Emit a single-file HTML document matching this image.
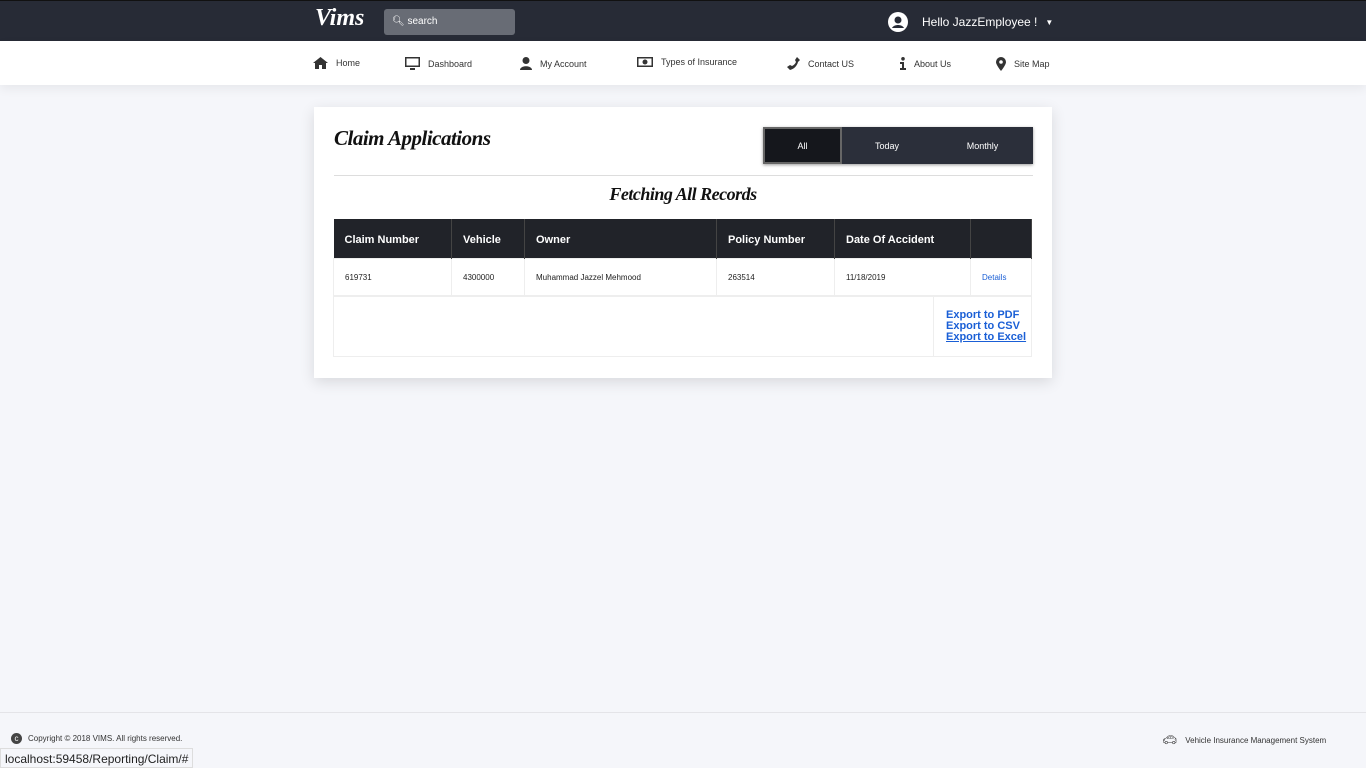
<!DOCTYPE html>
<html><head><meta charset="utf-8"><style>
*{box-sizing:border-box;margin:0;padding:0}
body{width:1366px;height:768px;background:#f5f6fa;font-family:"Liberation Sans",sans-serif;position:relative;overflow:hidden}
.top{position:absolute;top:0;left:0;width:1366px;height:41px;background:#272b36;border-top:1px solid #111}
.logo{position:absolute;left:315px;top:4px;color:#fff;font:italic bold 24px "Liberation Serif",serif}
.search{position:absolute;left:384px;top:8px;width:131px;height:26px;background:#686c75;border-radius:3px;color:#fff;font-size:10px;padding:7px 0 0 8px}
.user{position:absolute;left:888px;top:11px;color:#fff;font-size:12px;display:flex;align-items:center}
.nav{position:absolute;top:41px;left:0;width:1366px;height:44px;background:#fff;box-shadow:0 4px 10px rgba(0,0,0,.06)}
.nav span{position:absolute;top:16px;font-size:9px;color:#333;display:flex;align-items:center}
.nav svg{margin-right:8px}
.card{position:absolute;left:314px;top:107px;width:738px;height:271px;background:#fff;box-shadow:0 4px 14px rgba(0,0,0,.12)}
.h1{position:absolute;left:20px;top:19px;font:italic bold 21px "Liberation Serif",serif;color:#111;letter-spacing:-0.5px}
.tabs{position:absolute;left:449px;top:20px;width:270px;height:37px;background:#2b2f3a;display:flex;color:#fff;font-size:9px;box-shadow:0 1px 3px rgba(0,0,0,.4)}
.tabs div{display:flex;align-items:center;justify-content:center}
.hr{position:absolute;left:20px;top:68px;width:699px;height:1px;background:#ddd}
.h2{position:absolute;left:0;width:738px;text-align:center;top:77px;font:italic bold 18px "Liberation Serif",serif;color:#111;letter-spacing:-0.5px}
table{position:absolute;left:19px;top:112px;width:699px;border-collapse:collapse;font-size:8px}
th{background:#212329;color:#fff;font-size:11px;text-align:left;height:39px;padding:3px 0 0 11px;border-right:1px solid #444}
td{height:38px;padding:1px 0 0 11px;border:1px solid #eee;color:#222}
.exp{position:absolute;left:19px;top:188px;width:699px;height:62px;border:1px solid #eee}
.exp div{position:absolute;right:0;top:0;width:98px;height:60px;border-left:1px solid #eee;padding:14px 0 0 12px;color:#1a5fd6;font-size:11px;line-height:11px;font-weight:bold}
.foot{position:absolute;top:712px;left:0;width:1366px;border-top:1px solid #e4e4e8}
.status{position:absolute;left:0;top:748px;height:20px;border:1px solid #ddd;background:#f5f6fa;font-size:12px;padding:3px 4px;color:#222}
</style></head><body>
<div class="top">
<div class="logo">Vims</div>
<div class="search">&#128269;&#xFE0E; search</div>
<div class="user"><svg width="20" height="20" viewBox="0 0 20 20"><circle cx="10" cy="10" r="10" fill="#fff"/><circle cx="10" cy="8" r="3.5" fill="#272b36"/><path d="M4 16c2-4 10-4 12 0" fill="#272b36"/></svg><span style="margin-left:14px">Hello JazzEmployee !</span><span style="margin-left:8px;font-size:8px">▼</span></div>
</div>
<div class="nav">
<span style="left:313px"><svg width="15" height="12" viewBox="0 0 15 12"><path d="M7.5 0L0 6h2v6h4V8h3v4h4V6h2z" fill="#333"/></svg>Home</span>
<span style="left:405px"><svg width="15" height="13" viewBox="0 0 15 13"><rect x="0" y="0" width="15" height="10" fill="#333"/><rect x="1.5" y="1.5" width="12" height="7" fill="#fff"/><rect x="5" y="11" width="5" height="2" fill="#333"/></svg>Dashboard</span>
<span style="left:520px"><svg width="12" height="13" viewBox="0 0 12 13"><circle cx="6" cy="3.5" r="3.5" fill="#333"/><path d="M0 13c0-5 12-5 12 0z" fill="#333"/></svg>My Account</span>
<span style="left:637px"><svg width="16" height="10" viewBox="0 0 16 10"><rect width="16" height="10" fill="#333"/><rect x="1.5" y="1.5" width="13" height="7" fill="#fff"/><circle cx="8" cy="5" r="2.5" fill="#333"/></svg>Types of Insurance</span>
<span style="left:787px"><svg width="13" height="13" viewBox="0 0 13 13"><path d="M10 0l3 3-2 2c-1 4-4 7-8 8L0 10l3-2 2 1c2-1 3-2 4-4L8 3z" fill="#333"/></svg>Contact US</span>
<span style="left:900px"><svg width="6" height="13" viewBox="0 0 6 13"><circle cx="3" cy="1.8" r="1.8" fill="#333"/><path d="M0 5h4v6h2v2H0v-2h2V7H0z" fill="#333"/></svg>About Us</span>
<span style="left:996px"><svg width="10" height="14" viewBox="0 0 10 14"><path d="M5 0a5 5 0 0 1 5 5c0 3-5 9-5 9S0 8 0 5a5 5 0 0 1 5-5z" fill="#333"/><circle cx="5" cy="5" r="1.8" fill="#fff"/></svg>Site Map</span>
</div>
<div class="card">
<div class="h1">Claim Applications</div>
<div class="tabs"><div style="width:79px;background:#15171c;border:2px solid #666">All</div><div style="width:90px">Today</div><div style="width:101px">Monthly</div></div>
<div class="hr"></div>
<div class="h2">Fetching All Records</div>
<table><tr><th style="width:118px">Claim Number</th><th style="width:73px">Vehicle</th><th style="width:192px">Owner</th><th style="width:118px">Policy Number</th><th style="width:136px">Date Of Accident</th><th></th></tr>
<tr><td>619731</td><td>4300000</td><td>Muhammad Jazzel Mehmood</td><td>263514</td><td>11/18/2019</td><td style="color:#1a5fd6">Details</td></tr></table>
<div class="exp"><div>Export to PDF<br>Export to CSV<br><u>Export to Excel</u></div></div>
</div>
<div class="foot"></div>
<div style="position:absolute;left:11px;top:733px;font-size:8px;color:#333;display:flex;align-items:center"><span style="display:inline-block;width:11px;height:11px;border-radius:50%;background:#444;color:#fff;font-size:8px;text-align:center;line-height:11px;margin-right:6px">c</span>Copyright © 2018 VIMS. All rights reserved.</div>
<div style="position:absolute;left:1162px;top:733px;font-size:8px;color:#333;display:flex;align-items:center"><span style="font-size:12px;margin-right:8px">&#128663;&#xFE0E;</span>Vehicle Insurance Management System</div>
<div class="status">localhost:59458/Reporting/Claim/#</div>
</body></html>
